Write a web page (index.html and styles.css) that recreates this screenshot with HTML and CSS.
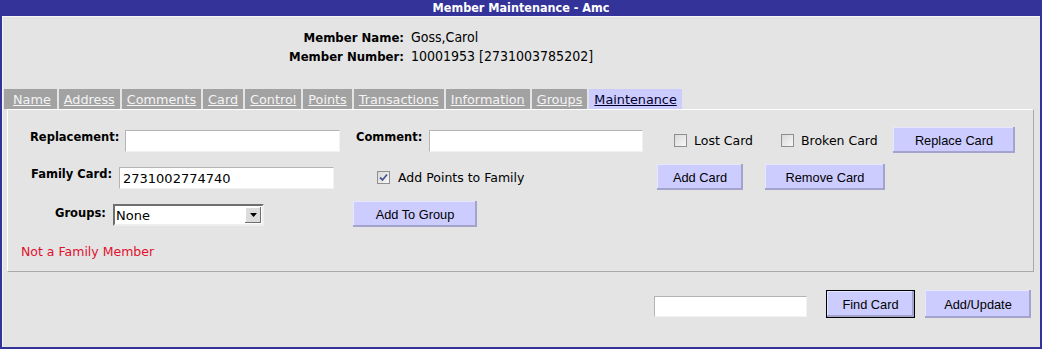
FILE: index.html
```html
<!DOCTYPE html>
<html lang="en">
<head>
  <meta charset="UTF-8" />
  <meta name="viewport" content="width=device-width, initial-scale=1.0" />
  <title>Member Maintenance - Amc</title>
  <link rel="stylesheet" href="styles.css">
</head>
<body>
  <div class="window">
    <div class="title">Member Maintenance - Amc</div>
    <div class="content">
      <div class="member-info">
        <span class="info-label">Member Name:</span>
        <span class="info-value">Goss,Carol</span>
        <span class="info-label">Member Number:</span>
        <span class="info-value">10001953 [2731003785202]</span>
      </div>

      <div class="tabs">
        <a class="tab first" href="#">Name</a>
        <a class="tab" href="#">Address</a>
        <a class="tab" href="#">Comments</a>
        <a class="tab" href="#">Card</a>
        <a class="tab" href="#">Control</a>
        <a class="tab" href="#">Points</a>
        <a class="tab" href="#">Transactions</a>
        <a class="tab" href="#">Information</a>
        <a class="tab" href="#">Groups</a>
        <a class="tab active" href="#">Maintenance</a>
      </div>

      <div class="panel">
        <div class="form-row row-one">
          <label class="field-label lbl-replacement" for="replacement">Replacement:</label>
          <input class="text-input w-215" id="replacement" type="text">
          <label class="field-label lbl-comment" for="comment">Comment:</label>
          <input class="text-input w-214" id="comment" type="text">
          <label class="check check-lost"><span class="box"></span>Lost Card</label>
          <label class="check check-broken"><span class="box"></span>Broken Card</label>
          <button class="btn btn-replace">Replace Card</button>
        </div>

        <div class="form-row row-two">
          <label class="field-label lbl-family" for="family">Family Card:</label>
          <input class="text-input w-215" id="family" type="text" value="2731002774740">
          <label class="check check-points">
            <span class="box checked">
              <svg width="9" height="9" viewBox="0 0 9 9"><path d="M1 4.5 L3.5 7 L8 1.5" fill="none" stroke="#4b5a8c" stroke-width="1.8"/></svg>
            </span>Add Points to Family
          </label>
          <button class="btn btn-add-card">Add Card</button>
          <button class="btn btn-remove-card">Remove Card</button>
        </div>

        <div class="form-row row-three">
          <label class="field-label lbl-groups" for="groups">Groups:</label>
          <div class="select-box">
            <select class="select" id="groups">
              <option>None</option>
            </select>
            <span class="select-arrow">
              <svg width="7" height="4" viewBox="0 0 7 4"><path d="M0 0 H7 L3.5 4 Z" fill="#000"/></svg>
            </span>
          </div>
          <button class="btn btn-add-group">Add To Group</button>
        </div>

        <div class="status">Not a Family Member</div>
      </div>

      <div class="bottom-bar">
        <input class="text-input find-input" type="text">
        <button class="btn btn-default btn-find">Find Card</button>
        <button class="btn btn-update">Add/Update</button>
      </div>
    </div>
  </div>
</body>
</html>
```

FILE: styles.css
```css
body {
  margin: 0;
  background-color: #e4e4e4;
  font-family: 'DejaVu Sans', Verdana, sans-serif;
}

.window {
  width: 1042px;
  height: 349px;
  box-sizing: border-box;
  border: 2px solid #333399;
  border-top: none;
  background-color: #e4e4e4;
  display: flex;
  flex-direction: column;
}

.title {
  height: 16px;
  line-height: 16px;
  margin: 0 -2px;
  background-color: #333399;
  color: #ffffff;
  text-align: center;
  font-family: 'DejaVu Sans Condensed', 'DejaVu Sans', sans-serif;
  font-stretch: condensed;
  font-weight: bold;
  font-size: 12.5px;
}

.content {
  flex: 1;
  border-top: 1px solid #f6f6f6;
  border-left: 1px solid #f6f6f6;
}

/* member header */
.member-info {
  display: grid;
  grid-template-columns: 401px auto;
  column-gap: 7px;
  padding-top: 11px;
  font-family: 'DejaVu Sans Condensed', 'DejaVu Sans', sans-serif;
  font-stretch: condensed;
  line-height: 19px;
  color: #000;
}

.info-label {
  text-align: right;
  font-weight: bold;
  font-size: 13px;
}

.info-value {
  font-size: 14px;
}

/* tabs */
.tabs {
  display: flex;
  margin: 23px 0 0 1px;
  height: 20px;
}

.tab {
  display: block;
  height: 20px;
  line-height: 21px;
  padding: 0 5px;
  margin-right: 2px;
  background-color: #a2a2a2;
  color: #f4f4f4;
  font-size: 12.8px;
  text-decoration: underline;
}

.tab.first {
  padding-left: 9px;
  padding-right: 6px;
}

.tab.active {
  background-color: #ccccff;
  color: #00002e;
}

/* panel */
.panel {
  margin: 0 6px 0 4px;
  padding: 17px 0 11px 0;
  border: 1px solid;
  border-color: #ffffff #a9a9a9 #a9a9a9 #ffffff;
}

.form-row {
  display: flex;
  align-items: flex-start;
  height: 26px;
  margin-bottom: 11px;
}

.row-one { padding-left: 22px; }
.row-two { padding-left: 23px; }
.row-three { padding-left: 47px; margin-bottom: 0; }

.field-label {
  margin-top: 2px;
  line-height: 16px;
  font-size: 11.5px;
  font-weight: bold;
  color: #000;
}

.lbl-replacement { width: 95px; }
.lbl-comment { width: 73px; margin-left: 16px; }
.lbl-family { width: 88px; }
.lbl-groups { width: 58px; margin-top: 4px; }

.text-input {
  height: 22px;
  margin-top: 3px;
  box-sizing: border-box;
  padding: 0 3px;
  border: 1px solid;
  border-color: #b4b4b4 #f2f2f2 #f2f2f2 #b4b4b4;
  background-color: #ffffff;
  font-family: 'DejaVu Sans', Verdana, sans-serif;
  font-size: 13px;
  color: #000;
  outline: none;
}

.w-215 { width: 215px; }
.w-214 { width: 214px; }

.check {
  display: flex;
  align-items: center;
  align-self: center;
  font-size: 12.5px;
  color: #000;
}

.check .box {
  width: 13px;
  height: 13px;
  box-sizing: border-box;
  margin-right: 7px;
  border: 1px solid #8e8f8f;
  background: linear-gradient(135deg, #d9d9d9, #f7f7f7);
  display: flex;
  align-items: center;
  justify-content: center;
}

.check-lost { width: 107px; margin-left: 31px; }
.check-broken { width: 112px; }
.check-points { width: 280px; margin-left: 43px; }
.check-points .box { margin-right: 8px; }

.select-box {
  display: flex;
  align-items: center;
  width: 151px;
  height: 22px;
  margin-top: 3px;
  box-sizing: border-box;
  border: 2px solid;
  border-color: #6f6f6f #eeeeee #eeeeee #6f6f6f;
  background-color: #ffffff;
}

.select {
  flex: 1;
  height: 100%;
  padding: 0 1px;
  border: none;
  background: transparent;
  appearance: none;
  -webkit-appearance: none;
  font-family: 'DejaVu Sans', Verdana, sans-serif;
  font-size: 13px;
  color: #000;
  outline: none;
}

.select-arrow {
  width: 16px;
  height: 16px;
  margin-right: 1px;
  box-sizing: border-box;
  display: flex;
  align-items: center;
  justify-content: center;
  background-color: #dcdcdc;
  box-shadow: inset -1px -1px 0 #6f6f6f, inset 1px 1px 0 #ffffff;
}

/* buttons */
.btn {
  height: 26px;
  padding: 0;
  border: none;
  background-color: #ccccff;
  box-shadow: inset -2px -2px 0 #a3a3cc, inset 1px 1px 0 #e6e6ff;
  font-family: 'Liberation Sans', Arial, sans-serif;
  font-size: 12.8px;
  color: #000;
  cursor: pointer;
}

.btn-replace { width: 122px; }
.btn-add-card { width: 86px; }
.btn-remove-card { width: 120px; margin-left: 22px; }
.btn-add-group { width: 124px; margin-left: 89px; }

.status {
  margin-top: 17px;
  padding-left: 13px;
  line-height: 16px;
  font-size: 12.5px;
  color: #e0102e;
}

/* bottom actions */
.bottom-bar {
  display: flex;
  justify-content: flex-end;
  align-items: flex-start;
  margin-top: 18px;
  padding-right: 9px;
}

.find-input {
  width: 153px;
  height: 21px;
  margin-top: 6px;
}

.bottom-bar .btn {
  height: 28px;
}

.btn-default {
  border: 1px solid #000;
}

.btn-find { width: 89px; margin-left: 19px; }
.btn-update { width: 106px; margin-left: 10px; }
```
